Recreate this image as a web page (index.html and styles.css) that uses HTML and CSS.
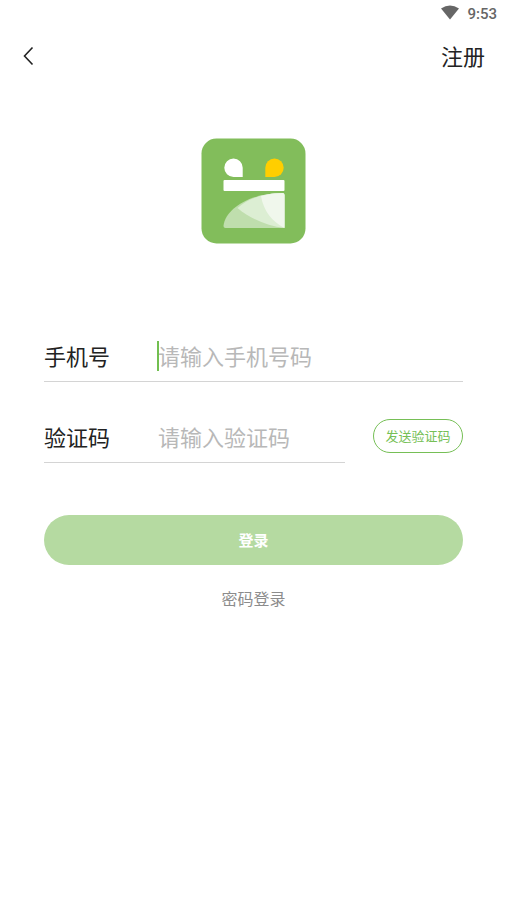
FILE: index.html
```html
<!DOCTYPE html>
<html lang="zh-CN">
<head>
<meta charset="utf-8">
<meta name="viewport" content="width=device-width, initial-scale=1">
<title>登录</title>
<link rel="stylesheet" href="styles.css">
</head>
<body>
<div class="status-bar">
  <svg class="wifi" width="20" height="15" viewBox="0 0 20 15" aria-hidden="true"><path d="M1 3.600Q10-2.400 19 3.600L10 14.600Z" fill="#666"/></svg>
  <span>9:53</span>
</div>
<header class="nav">
  <button class="back" type="button" aria-label="返回">
    <svg width="12" height="20" viewBox="0 0 12 20" fill="none" stroke="#222" stroke-width="1.6" aria-hidden="true"><path d="M10.500 1.500L2.500 10L10.500 18.500"/></svg>
  </button>
  <a class="register" href="#">注册</a>
</header>
<main>
  <svg class="logo" width="105" height="106" viewBox="0 0 105 106" aria-hidden="true">
    <rect x="0.500" y="0.500" width="104" height="105" rx="15" fill="#82bd5b"/>
    <path d="M32.500 20.500A9.200 9.200 0 0 1 41.700 29.700V38.900H32.500A9.200 9.200 0 0 1 32.500 20.500Z" fill="#fff"/>
    <path d="M73.500 20.500A9.200 9.200 0 0 0 64.300 29.700V38.900H73.500A9.200 9.200 0 0 0 73.500 20.500Z" fill="#ffce00"/>
    <rect x="22.500" y="42" width="61" height="11" rx="1" fill="#fff"/>
    <g transform="translate(.5 0)">
      <path d="M22 88C24 70 50 55 81 55Q83 55 83 57V88Q83 90 81 90H24Q22 90 22 88Z" fill="#bfdead"/>
      <path d="M36 70C47 60 63 55 81 55Q83 55 83 57V90C66 88 49 81 36 70Z" fill="#dceed3"/>
      <path d="M59.500 58Q70 55 81 55Q83 55 83 57V90C71 84 62 73 59.500 58Z" fill="#f0f7ec"/>
    </g>
  </svg>
  <form class="login">
    <div class="row">
      <div class="field">
        <label for="phone">手机号</label>
        <div class="entry active"><input id="phone" type="tel" placeholder="请输入手机号码"></div>
      </div>
    </div>
    <div class="row">
      <div class="field">
        <label for="code">验证码</label>
        <div class="entry"><input id="code" type="text" placeholder="请输入验证码"></div>
      </div>
      <button class="send" type="button">发送验证码</button>
    </div>
    <button class="submit" type="submit">登录</button>
  </form>
  <a class="alternate" href="#">密码登录</a>
</main>
</body>
</html>
```
FILE: styles.css
```css
* {
  box-sizing: border-box;
}

body {
  margin: 0;
  background: #fff;
  color: #222;
  font-family: "Noto Sans CJK SC", sans-serif;
  font-size: 22px;
}

button,
input {
  font-family: inherit;
  padding: 0;
  border: 0;
  background: none;
}

a {
  text-decoration: none;
}

.status-bar {
  display: flex;
  justify-content: flex-end;
  align-items: center;
  gap: 7px;
  height: 27px;
  padding: 0 9px;
  color: #666;
  font: 500 15px Roboto, sans-serif;
}

.wifi {
  margin-bottom: 2px;
}

.nav {
  display: flex;
  justify-content: space-between;
  align-items: center;
  height: 57px;
  padding: 0 21px 0 22px;
}

.back {
  display: flex;
  padding: 8px 0;
}

.register {
  padding-bottom: 2px;
  color: #222;
}

main {
  display: flex;
  flex-direction: column;
  align-items: center;
  padding: 54px 43px 0 44px;
}

.login {
  display: flex;
  flex-direction: column;
  align-self: stretch;
  gap: 30px;
  margin-top: 87px;
}

.row {
  display: flex;
  align-items: flex-start;
  gap: 28px;
}

.field {
  display: flex;
  flex: 1;
  align-items: center;
  min-width: 0;
  height: 51px;
  border-bottom: 1px solid #d4d4d4;
}

.field label {
  flex: none;
  width: 114px;
  padding-bottom: 2px;
}

.entry {
  position: relative;
  flex: 1;
  min-width: 0;
}

.entry input {
  display: block;
  width: 100%;
  height: 30px;
  padding-bottom: 2px;
  color: #222;
  font-size: 22px;
  outline: none;
  caret-color: #72bf50;
}

.entry input::placeholder {
  color: #b8b8b8;
}

.active::before {
  content: "";
  position: absolute;
  top: 0;
  bottom: 0;
  left: -1px;
  width: 2px;
  background: #72bf50;
}

.send {
  width: 90px;
  height: 34px;
  margin-top: 7px;
  padding-bottom: 1px;
  border: 1px solid #76bf56;
  border-radius: 17px;
  color: #76bf56;
  font-size: 13px;
}

.submit {
  height: 50px;
  margin-top: 22px;
  padding-bottom: 1px;
  border-radius: 25px;
  background: #b5daa1;
  color: #fff;
  font-size: 15px;
  font-weight: 700;
}

.alternate {
  margin-top: 21px;
  color: #8c8c8c;
  font-size: 16px;
  line-height: 24px;
}
```
